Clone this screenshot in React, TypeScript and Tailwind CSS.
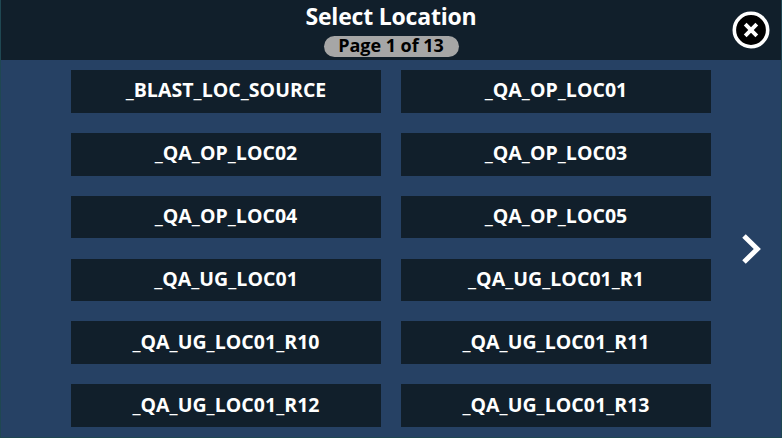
const locations = [
  '_BLAST_LOC_SOURCE',
  '_QA_OP_LOC01',
  '_QA_OP_LOC02',
  '_QA_OP_LOC03',
  '_QA_OP_LOC04',
  '_QA_OP_LOC05',
  '_QA_UG_LOC01',
  '_QA_UG_LOC01_R1',
  '_QA_UG_LOC01_R10',
  '_QA_UG_LOC01_R11',
  '_QA_UG_LOC01_R12',
  '_QA_UG_LOC01_R13',
];

function Header() {
  return (
    <header className="grid h-[60px] shrink-0 grid-cols-[70px_640px_1fr] bg-[#111f2b]">
      <div className="col-start-2 flex flex-col items-center">
        <h1 className="h-[36px] text-[23px] leading-[33px] font-bold tracking-[-0.2px] whitespace-nowrap text-white">
          Select Location
        </h1>
        <div className="h-[21px] w-[135px] rounded-full bg-[#a6a6a6] text-center text-[18px] leading-[19px] font-bold tracking-[-0.05px] whitespace-nowrap text-black">
          Page 1 of 13
        </div>
      </div>
      <button aria-label="Close" className="flex items-center justify-center pl-[10px]">
        <svg width="38" height="38" viewBox="0 0 38 38">
          <circle cx="19" cy="19" r="16.7" fill="#000" stroke="#fff" strokeWidth="3.6" />
          <path d="M13.2 13.2 24.8 24.8M24.8 13.2 13.2 24.8" stroke="#fff" strokeWidth="3.9" />
        </svg>
      </button>
    </header>
  );
}

export default function App() {
  return (
    <div className="flex h-[438px] w-[782px] flex-col overflow-hidden border-x border-b border-[#1f4752] bg-[#264164] font-['Open_Sans','Noto_Sans',sans-serif]">
      <Header />
      <main className="grid grid-cols-[70px_640px_1fr] pt-[10px]">
        <div className="col-start-2 grid auto-rows-[42.7px] grid-cols-2 gap-x-5 gap-y-[20.175px]">
          {locations.map((name) => (
            <button
              key={name}
              className="bg-[#111f2b] pb-[2px] text-[19.5px] leading-[26px] font-bold tracking-[0.05px] whitespace-nowrap text-white"
            >
              {name}
            </button>
          ))}
        </div>
        <button aria-label="Next page" className="flex items-center justify-center pt-px pl-[9px]">
          <svg width="22" height="34" viewBox="0 0 22 34">
            <path d="M4 4 17.3 17 4 30" fill="none" stroke="#fff" strokeWidth="5" />
          </svg>
        </button>
      </main>
    </div>
  );
}
